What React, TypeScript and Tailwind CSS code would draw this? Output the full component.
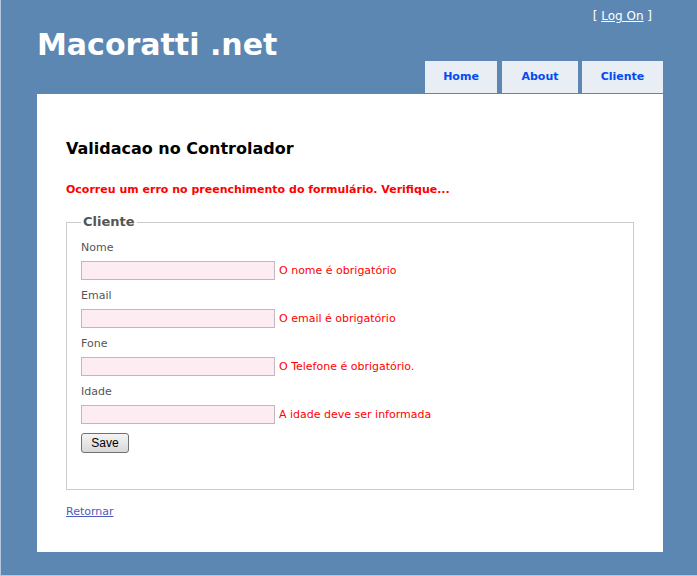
import React from 'react'

const fields = [
  { label: 'Nome', error: 'O nome é obrigatório' },
  { label: 'Email', error: 'O email é obrigatório' },
  { label: 'Fone', error: 'O Telefone é obrigatório.' },
  { label: 'Idade', error: 'A idade deve ser informada' },
]

const tabs = [
  { name: 'Home', width: 'w-[72px]' },
  { name: 'About', width: 'w-[76px]' },
  { name: 'Cliente', width: 'w-[81px]' },
]

export default function App() {
  return (
    <div
      className="min-h-[576px] bg-[#5c87b2] border-l border-b-2 border-[#b4c8e2] pl-[36px] pb-[23px]"
      style={{ fontFamily: '"DejaVu Sans", Verdana, sans-serif' }}
    >
      <div className="w-[626px]">
        {/* header */}
        <header className="flex justify-between h-[94px]">
          <h1 className="mt-[27px] text-[30px] leading-[36px] font-bold text-white">Macoratti .net</h1>
          <div className="flex flex-col items-end justify-between">
            <div className="mt-[8px] mr-[11px] text-[12px] leading-[16px] text-white">
              [ <a href="#" className="underline text-white">Log On</a> ]
            </div>
            <nav className="flex mb-[1px]">
              {tabs.map((t, i) => (
                <a
                  key={t.name}
                  href="#"
                  className={`${t.width} ${i === 1 ? 'ml-[5px]' : i === 2 ? 'ml-[4px]' : ''} h-[32px] flex items-center justify-center bg-[#e8eef4] text-[#034af3] text-[11px] font-bold`}
                >
                  {t.name}
                </a>
              ))}
            </nav>
          </div>
        </header>

        {/* main panel */}
        <main className="bg-white px-[29px] pt-[45px] pb-[32px]">
          <h2 className="text-[16px] leading-[20px] font-bold text-black">Validacao no Controlador</h2>
          <div className="mt-[23px] text-[11px] leading-[16px] font-bold text-[#ff0000]">
            Ocorreu um erro no preenchimento do formulário. Verifique...
          </div>

          <fieldset className="mt-[15px] border border-[#c8cccc] px-[14px] pt-[8px] pb-[36px]">
            <legend className="px-[2px] text-[13px] leading-[18px] font-bold text-[#555]">Cliente</legend>
            {fields.map((f, i) => (
              <div key={f.label} className={i > 0 ? 'mt-[7px]' : ''}>
                <div className="text-[11px] leading-[18px] text-[#555]">{f.label}</div>
                <div className="mt-[4px] flex items-center">
                  <input
                    type="text"
                    className="w-[194px] h-[19px] border border-[#c4b6bd] bg-[#fdedf2] outline-none"
                  />
                  <span className="ml-[4px] text-[11px] leading-[16px] text-[#ff0000]">{f.error}</span>
                </div>
              </div>
            ))}
            <button
              type="button"
              className="mt-[9px] w-[48px] h-[20px] flex items-center justify-center border border-[#707070] rounded-[3px] bg-gradient-to-b from-[#f4f4f4] to-[#d8d8d8] text-[12px] text-black"
              style={{ fontFamily: '"Liberation Sans", Arial, sans-serif' }}
            >
              Save
            </button>
          </fieldset>

          <div className="mt-[14px] text-[11px] leading-[16px]">
            <a href="#" className="underline text-[#505abc]">Retornar</a>
          </div>
        </main>
      </div>
    </div>
  )
}
